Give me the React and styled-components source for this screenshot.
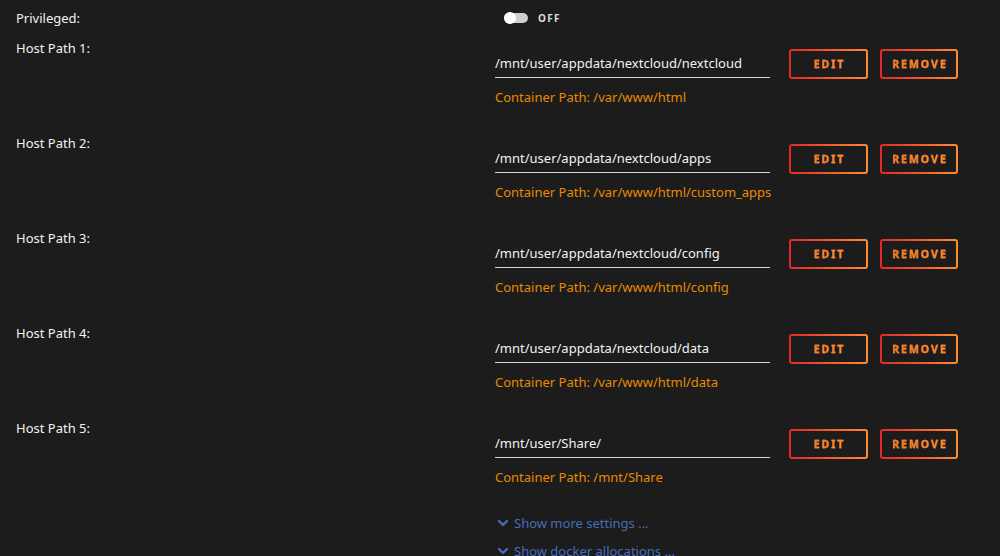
import styled, { createGlobalStyle } from 'styled-components';
import { ChevronDown } from 'lucide-react';

const paths = [
  { host: '/mnt/user/appdata/nextcloud/nextcloud', container: '/var/www/html' },
  { host: '/mnt/user/appdata/nextcloud/apps', container: '/var/www/html/custom_apps' },
  { host: '/mnt/user/appdata/nextcloud/config', container: '/var/www/html/config' },
  { host: '/mnt/user/appdata/nextcloud/data', container: '/var/www/html/data' },
  { host: '/mnt/user/Share/', container: '/mnt/Share' },
];

const GlobalStyle = createGlobalStyle`
  html, body {
    margin: 0;
    background: #1c1c1c;
    font-family: 'Noto Sans', 'Open Sans', sans-serif;
  }
`;

const App = () => {
  return (
    <Page>
      <GlobalStyle />
      <TopRow>
        <Label>Privileged:</Label>
        <ToggleWrap>
          <Switch><Knob /></Switch>
          <SwitchText>OFF</SwitchText>
        </ToggleWrap>
      </TopRow>
      {paths.map((p, i) => (
        <Row key={p.host}>
          <Label>Host Path {i + 1}:</Label>
          <Value>
            <Field>
              <PathInput>{p.host}</PathInput>
              <Button $wide={false}><span>EDIT</span></Button>
              <Button $wide><span>REMOVE</span></Button>
            </Field>
            <Hint>Container Path: {p.container}</Hint>
          </Value>
        </Row>
      ))}
      <Links>
        <MoreLink><ChevronDown size={16} strokeWidth={3.5} /> Show more settings ...</MoreLink>
        <MoreLink><ChevronDown size={16} strokeWidth={3.5} /> Show docker allocations ...</MoreLink>
      </Links>
    </Page>
  );
};

const Page = styled.div`
  padding: 10px 0 0 16px;
  height: 546px;
  overflow: hidden;
  color: #f2f2f2;
`;

const TopRow = styled.div`
  display: grid;
  grid-template-columns: 479px 1fr;
  height: 30px;
`;

const Row = styled.div`
  display: grid;
  grid-template-columns: 479px 1fr;
  margin-bottom: 29px;
`;

const Label = styled.div`
  font-size: 13px;
  line-height: 16px;
  color: #f2f2f2;
`;

const ToggleWrap = styled.div`
  display: flex;
  align-items: center;
  gap: 10px;
  padding-left: 9px;
  height: 16px;
`;

const Switch = styled.div`
  width: 24px;
  height: 10px;
  border-radius: 5px;
  background: #cfcfcf;
  position: relative;
`;

const Knob = styled.div`
  position: absolute;
  left: 0;
  top: -1px;
  width: 12px;
  height: 12px;
  border-radius: 50%;
  background: #fff;
`;

const SwitchText = styled.span`
  font-size: 10px;
  font-weight: 700;
  letter-spacing: 1.3px;
  color: #dcdcdc;
`;

const Value = styled.div`
  padding-top: 9px;
`;

const Field = styled.div`
  display: flex;
  align-items: stretch;
  height: 30px;
`;

const PathInput = styled.div`
  width: 275px;
  box-sizing: border-box;
  border-bottom: 1px solid #d4d4d4;
  margin-bottom: 1px;
  font-size: 13px;
  line-height: 28px;
  color: #f2f2f2;
  margin-right: 19px;
`;

const Button = styled.div`
  box-sizing: border-box;
  width: ${(p) => (p.$wide ? '78px' : '79px')};
  margin-left: ${(p) => (p.$wide ? '12px' : '0')};
  border: 2px solid transparent;
  border-radius: 3px;
  background: linear-gradient(#1c1c1c, #1c1c1c) padding-box,
    linear-gradient(90deg, #e22828, #ff8c2f) border-box;
  display: flex;
  align-items: center;
  justify-content: center;

  span {
    font-size: 10.5px;
    font-weight: 700;
    letter-spacing: 2px;
    padding-left: 2px;
    background: linear-gradient(90deg, #f07a2a, #ff8f30);
    -webkit-background-clip: text;
    background-clip: text;
    -webkit-text-fill-color: transparent;
    -webkit-text-stroke: 0.3px #f58530;
  }
`;

const Hint = styled.div`
  margin-top: 9px;
  font-size: 13px;
  line-height: 18px;
  color: #e68a00;
`;

const Links = styled.div`
  padding-left: 479px;
  margin-top: -6px;
`;

const MoreLink = styled.div`
  display: flex;
  align-items: center;
  gap: 3px;
  font-size: 13px;
  line-height: 18px;
  height: 28px;
  color: #486dba;

  svg {
    color: #486dba;
  }
`;

export default App;
